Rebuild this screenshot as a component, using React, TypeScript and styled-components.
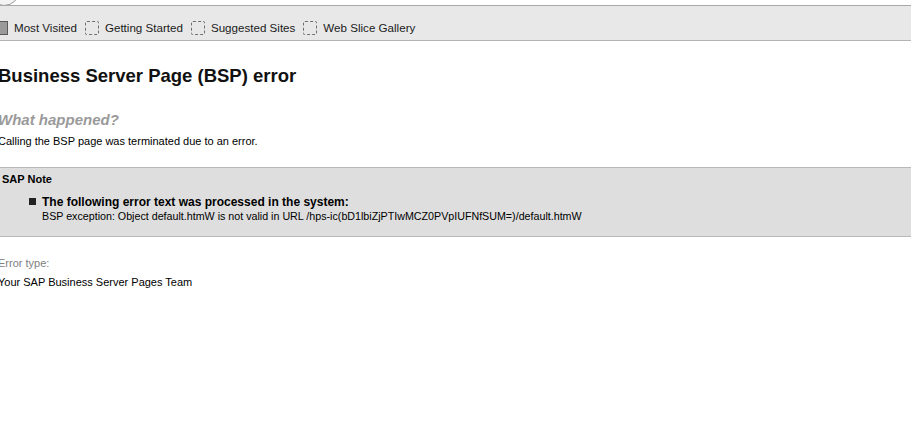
import styled, { createGlobalStyle } from 'styled-components';

const GlobalStyle = createGlobalStyle`
    html, body {
        margin: 0;
        padding: 0;
        background: #ffffff;
        overflow: hidden;
    }
`;

const Window = styled.div`
    width: 911px;
    height: 424px;
    overflow: hidden;
    background: #fff;
`;

const AddressStrip = styled.div`
    position: relative;
    height: 5px;
    background: #fff;
    border-bottom: 1px solid #a9a9a9;
    overflow: hidden;
`;

const BackButton = styled.div`
    position: absolute;
    left: -12px;
    top: -26px;
    width: 30px;
    height: 30px;
    border-radius: 50%;
    border: 1px solid #9a9a9a;
    background: #f4f4f4;
`;

const Favorites = styled.div`
    display: flex;
    align-items: center;
    height: 35px;
    padding-top: 9px;
    box-sizing: border-box;
    background: #e8e8e8;
    border-bottom: 1px solid #b4b4b4;
    font-family: 'Liberation Sans', Arial, sans-serif;
    font-size: 11.6px;
    color: #1a1a1a;
`;

const FavItem = styled.div`
    display: flex;
    align-items: center;
    gap: 6px;
    margin-right: 8px;
`;

const DashedIcon = styled.span`
    display: inline-block;
    width: 12px;
    height: 12px;
    border: 1px dashed #6f6f6f;
    border-radius: 2px;
`;

const PageIcon = styled.span`
    display: inline-block;
    width: 8px;
    height: 12px;
    margin-left: -1px;
    background: #9a9a9a;
    border: 1px solid #5a5a5a;
    border-left: none;
`;

const Content = styled.div`
    margin-left: -2px;
    font-family: Tahoma, 'Liberation Sans', Arial, sans-serif;
    font-size: 11px;
    color: #000;
`;

const Title = styled.h1`
    margin: 24px 0 0 0;
    font-size: 18.5px;
    font-weight: bold;
    color: #111;
`;

const SubTitle = styled.h2`
    margin: 24px 0 0 0;
    font-size: 15px;
    font-weight: bold;
    font-style: italic;
    color: #9a9a9a;
`;

const Para = styled.p`
    margin: 7px 0 0 0;
`;

const NoteBox = styled.div`
    margin-top: 20px;
    background: #dedede;
    border-top: 1px solid #b8b8b8;
    border-bottom: 1px solid #b8b8b8;
    padding: 5px 4px 14px 4px;
`;

const NoteTitle = styled.div`
    font-weight: bold;
`;

const NoteList = styled.ul`
    margin: 10px 0 0 0;
    padding-left: 40px;
    list-style: none;
`;

const NoteItem = styled.li`
    position: relative;

    &::before {
        content: '';
        position: absolute;
        left: -13px;
        top: 3px;
        width: 7px;
        height: 7px;
        background: #222;
    }
`;

const NoteHeading = styled.div`
    font-weight: bold;
    font-size: 12px;
`;

const NoteDetail = styled.div`
    margin-top: 1px;
    font-size: 10.7px;
`;

const Muted = styled.div<{ $gap: number }>`
    margin-top: ${(p) => p.$gap}px;
    color: ${(p) => (p.$gap > 15 ? '#808080' : '#000')};
`;

const favorites = ['Getting Started', 'Suggested Sites', 'Web Slice Gallery'];

export default function App() {
    return (
        <Window>
            <GlobalStyle />
            <AddressStrip>
                <BackButton />
            </AddressStrip>
            <Favorites>
                <FavItem>
                    <PageIcon />
                    <span>Most Visited</span>
                </FavItem>
                {favorites.map((f) => (
                    <FavItem key={f}>
                        <DashedIcon />
                        <span>{f}</span>
                    </FavItem>
                ))}
            </Favorites>
            <Content>
                <Title>Business Server Page (BSP) error</Title>
                <SubTitle>What happened?</SubTitle>
                <Para>Calling the BSP page was terminated due to an error.</Para>
                <NoteBox>
                    <NoteTitle>SAP Note</NoteTitle>
                    <NoteList>
                        <NoteItem>
                            <NoteHeading>The following error text was processed in the system:</NoteHeading>
                            <NoteDetail>
                                BSP exception: Object default.htmW is not valid in URL
                                /hps-ic(bD1lbiZjPTIwMCZ0PVpIUFNfSUM=)/default.htmW
                            </NoteDetail>
                        </NoteItem>
                    </NoteList>
                </NoteBox>
                <Muted $gap={20}>Error type:</Muted>
                <Muted $gap={7}>Your SAP Business Server Pages Team</Muted>
            </Content>
        </Window>
    );
}
